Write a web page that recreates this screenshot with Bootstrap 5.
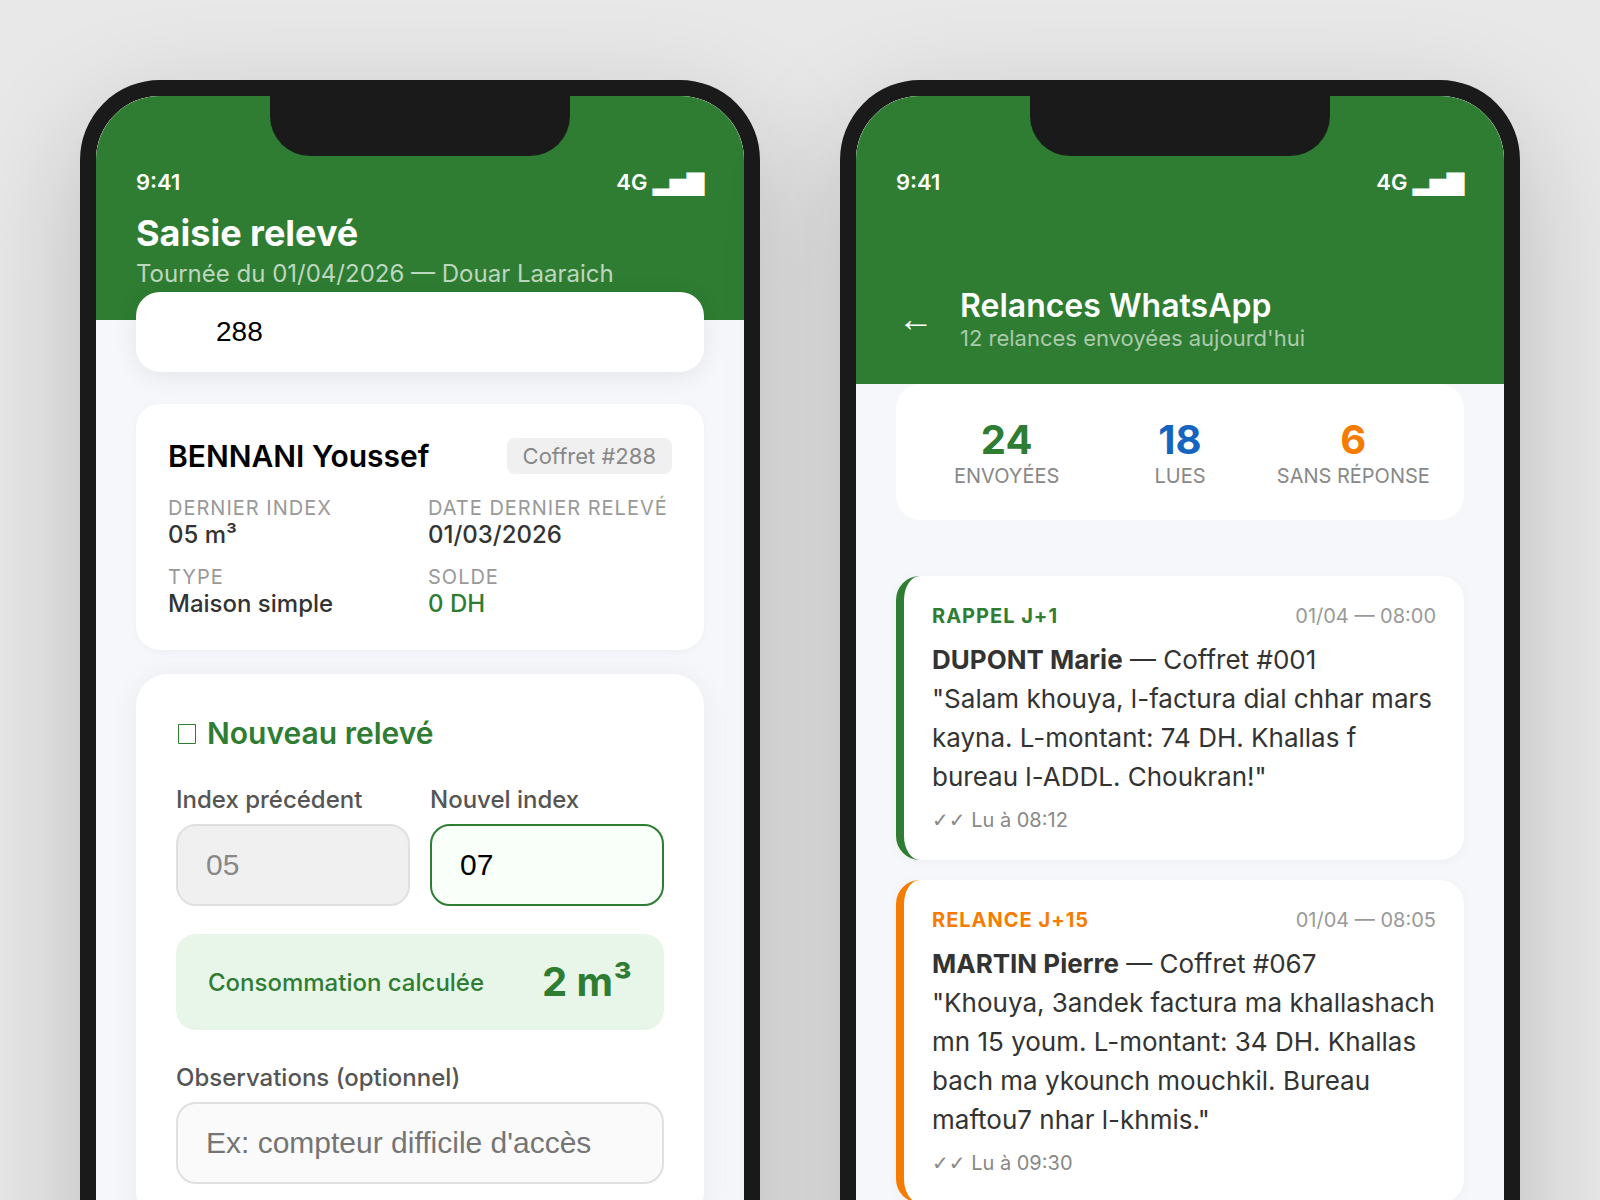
<!DOCTYPE html>
<html lang="fr">
<head>
<meta charset="utf-8">
<meta name="viewport" content="width=device-width, initial-scale=1">
<title>Relevés et relances</title>
<link rel="stylesheet" href="https://cdn.jsdelivr.net/npm/bootstrap@5.3.0/dist/css/bootstrap.min.css">
<style>
:root { --leaf: #2e7d32; --amber: #f57c00; --ocean: #1565c0; --ink: #1a1a1a; }
body { font-family: Inter, "DejaVu Sans", sans-serif; background: #e8e8e8; color: #000; line-height: normal; }
.stage { height: 100vh; padding: 80px; gap: 80px; }
.phone { flex: 1 1 0; min-width: 0; height: 1440px; background: #fff; border: 16px solid var(--ink); border-radius: 80px; box-shadow: 0 40px 120px rgba(0,0,0,.2); }
.phone-screen { background: #f5f7fb; height: 100%; }
.notch { width: 300px; height: 60px; background: var(--ink); border-radius: 0 0 40px 40px; }
.topbar { background: var(--leaf); padding: 72px 40px 32px; }
.status { height: 28px; font-size: 22px; line-height: 28px; font-weight: 600; }
.status-bars { font-family: "Liberation Sans", sans-serif; }
.page-title { font-size: 36px; line-height: 43px; font-weight: 700; margin: 16px 0 4px; }
.page-sub { font-size: 24px; line-height: 29px; color: rgba(255,255,255,.7); }
.back-row { margin-top: 90px; gap: 24px; }
.back-btn { width: 40px; font: 36px/48px "Liberation Sans", Arial, sans-serif; }
.back-title { font-size: 32px; line-height: 39px; font-weight: 600; }
.back-sub { font-size: 22px; line-height: 27px; color: rgba(255,255,255,.6); }
.content-pad { padding: 0 40px; }
.panel { background: #fff; border-radius: 24px; }
.search-panel { margin-top: -28px; padding: 0 32px 0 80px; height: 80px; box-shadow: 0 4px 24px rgba(0,0,0,.08); }
.search-panel input { font: 28px/32px "Liberation Sans", Arial, sans-serif; color: #000; outline: 0; }
.client-panel { margin-top: 32px; padding: 32px; box-shadow: 0 2px 8px rgba(0,0,0,.04); }
.client-head { height: 40px; margin-bottom: 20px; }
.client-name { font-size: 30px; line-height: 37px; font-weight: 600; }
.locker-tag { font-size: 22px; line-height: 28px; padding: 4px 16px; border-radius: 8px; background: #f0f0f0; color: #888; }
.fact-grid { display: grid; grid-template-columns: 1fr 1fr; gap: 16px; }
.fact-grid dt { font-size: 20px; line-height: 24px; font-weight: 400; letter-spacing: 1px; color: #999; white-space: nowrap; }
.fact-grid dd { font-size: 24px; line-height: 29px; font-weight: 500; color: #333; margin: 0; }
.form-panel { margin-top: 24px; padding: 40px; border-radius: 32px; box-shadow: 0 4px 32px rgba(0,0,0,.06); }
.form-title { font-size: 30px; line-height: 39px; font-weight: 600; color: var(--leaf); margin-bottom: 32px; }
.form-title svg { margin: 0 10px 0 2px; }
.field-pair { gap: 20px; margin-bottom: 28px; }
.field-label { font-size: 24px; line-height: 29px; font-weight: 500; color: #555; margin-bottom: 10px; }
.field-box.form-control { font: 30px/34px "Liberation Sans", Arial, sans-serif; padding: 22px 28px; border: 2px solid #e0e0e0; border-radius: 20px; background: #fafafa; color: #000; }
.field-box.form-control::placeholder { color: #757575; }
.field-box.form-control:disabled { background: #f0f0f0; color: #888; }
.field-box.form-control.field-on { background: #f9fff9; border-color: var(--leaf); }
.result-box { padding: 24px 32px; border-radius: 20px; background: #e8f5e9; color: var(--leaf); margin-bottom: 33px; }
.result-text { font-size: 24px; line-height: 29px; font-weight: 500; }
.result-value { font-size: 40px; line-height: 48px; font-weight: 700; }
.stats-panel { padding: 32px; gap: 16px; margin-bottom: 56px; }
.stats-panel > div { flex: 1 1 0; min-width: 0; }
.stat-num { font-size: 40px; line-height: 48px; font-weight: 700; }
.stat-name { font-size: 20px; line-height: 24px; color: #888; white-space: nowrap; }
.msg { padding: 28px; border-left: 8px solid; margin-bottom: 20px; box-shadow: 0 2px 12px rgba(0,0,0,.04); }
.msg-leaf { border-color: var(--leaf); }
.msg-amber { border-color: var(--amber); }
.msg-head { font-size: 20px; line-height: 24px; margin-bottom: 12px; }
.msg-kind { font-weight: 700; letter-spacing: 1px; }
.msg-date { color: #999; }
.msg-text { font-size: 26px; line-height: 39px; color: #333; margin-bottom: 12px; }
.msg-text strong { font-weight: 700; }
.msg-read { font-size: 20px; line-height: 24px; color: #888; }
.msg-ticks { font-family: "DejaVu Sans", sans-serif; }
.tone-leaf { color: var(--leaf) !important; }
.tone-amber { color: var(--amber); }
.tone-ocean { color: var(--ocean); }
</style>
</head>
<body>
<main class="stage d-flex align-items-start overflow-hidden">
  <section class="phone position-relative overflow-hidden">
    <div class="notch position-absolute top-0 start-50 translate-middle-x"></div>
    <div class="phone-screen">
      <header class="topbar text-white">
        <div class="status d-flex justify-content-between"><span>9:41</span><span>4G <span class="status-bars">▂▅▇</span></span></div>
        <h1 class="page-title">Saisie relevé</h1>
        <div class="page-sub">Tournée du 01/04/2026 — Douar Laaraich</div>
      </header>
      <div class="content-pad">
        <div class="panel search-panel d-flex align-items-center position-relative">
          <input type="text" class="border-0 bg-transparent p-0 w-100" value="288" aria-label="Numéro de coffret">
        </div>
        <article class="panel client-panel">
          <div class="client-head d-flex justify-content-between align-items-center">
            <h2 class="client-name mb-0">BENNANI Youssef</h2>
            <span class="locker-tag">Coffret #288</span>
          </div>
          <dl class="fact-grid mb-0">
            <div><dt class="text-uppercase">Dernier index</dt><dd>05 m³</dd></div>
            <div><dt class="text-uppercase">Date dernier relevé</dt><dd>01/03/2026</dd></div>
            <div><dt class="text-uppercase">Type</dt><dd>Maison simple</dd></div>
            <div><dt class="text-uppercase">Solde</dt><dd class="tone-leaf">0 DH</dd></div>
          </dl>
        </article>
        <form class="panel form-panel">
          <h2 class="form-title d-flex align-items-center"><svg width="19" height="22" viewBox="0 0 19 22" fill="none" stroke="currentColor" aria-hidden="true"><path d="M.5 1.5h17v19H.5z"/></svg>Nouveau relevé</h2>
          <div class="field-pair d-flex">
            <div class="flex-fill w-50">
              <label class="field-label d-block" for="prev">Index précédent</label>
              <input id="prev" class="form-control field-box" value="05" disabled>
            </div>
            <div class="flex-fill w-50">
              <label class="field-label d-block" for="next">Nouvel index</label>
              <input id="next" class="form-control field-box field-on" value="07">
            </div>
          </div>
          <div class="result-box d-flex justify-content-between align-items-center">
            <span class="result-text">Consommation calculée</span>
            <span class="result-value">2 m³</span>
          </div>
          <label class="field-label d-block" for="obs">Observations (optionnel)</label>
          <input id="obs" class="form-control field-box" placeholder="Ex: compteur difficile d'accès">
        </form>
      </div>
    </div>
  </section>

  <section class="phone position-relative overflow-hidden">
    <div class="notch position-absolute top-0 start-50 translate-middle-x"></div>
    <div class="phone-screen">
      <header class="topbar text-white">
        <div class="status d-flex justify-content-between"><span>9:41</span><span>4G <span class="status-bars">▂▅▇</span></span></div>
        <div class="back-row d-flex align-items-center">
          <button type="button" class="back-btn border-0 bg-transparent text-white p-0" aria-label="Retour">←</button>
          <div>
            <h1 class="back-title mb-0">Relances WhatsApp</h1>
            <div class="back-sub">12 relances envoyées aujourd'hui</div>
          </div>
        </div>
      </header>
      <div class="content-pad">
        <div class="panel stats-panel d-flex text-center">
          <div><div class="stat-num tone-leaf">24</div><div class="stat-name text-uppercase">Envoyées</div></div>
          <div><div class="stat-num tone-ocean">18</div><div class="stat-name text-uppercase">Lues</div></div>
          <div><div class="stat-num tone-amber">6</div><div class="stat-name text-uppercase">Sans réponse</div></div>
        </div>
        <article class="panel msg msg-leaf">
          <div class="msg-head d-flex justify-content-between"><span class="msg-kind tone-leaf">RAPPEL J+1</span><span class="msg-date">01/04 — 08:00</span></div>
          <p class="msg-text"><strong>DUPONT Marie</strong> — Coffret #001<br>"Salam khouya, l-factura dial chhar mars kayna. L-montant: 74 DH. Khallas f bureau l-ADDL. Choukran!"</p>
          <div class="msg-read"><span class="msg-ticks">✓✓</span> Lu à 08:12</div>
        </article>
        <article class="panel msg msg-amber">
          <div class="msg-head d-flex justify-content-between"><span class="msg-kind tone-amber">RELANCE J+15</span><span class="msg-date">01/04 — 08:05</span></div>
          <p class="msg-text"><strong>MARTIN Pierre</strong> — Coffret #067<br>"Khouya, 3andek factura ma khallashach mn 15 youm. L-montant: 34 DH. Khallas bach ma ykounch mouchkil. Bureau maftou7 nhar l-khmis."</p>
          <div class="msg-read"><span class="msg-ticks">✓✓</span> Lu à 09:30</div>
        </article>
      </div>
    </div>
  </section>
</main>
<script src="https://cdn.jsdelivr.net/npm/bootstrap@5.3.0/dist/js/bootstrap.bundle.min.js"></script>
</body>
</html>
